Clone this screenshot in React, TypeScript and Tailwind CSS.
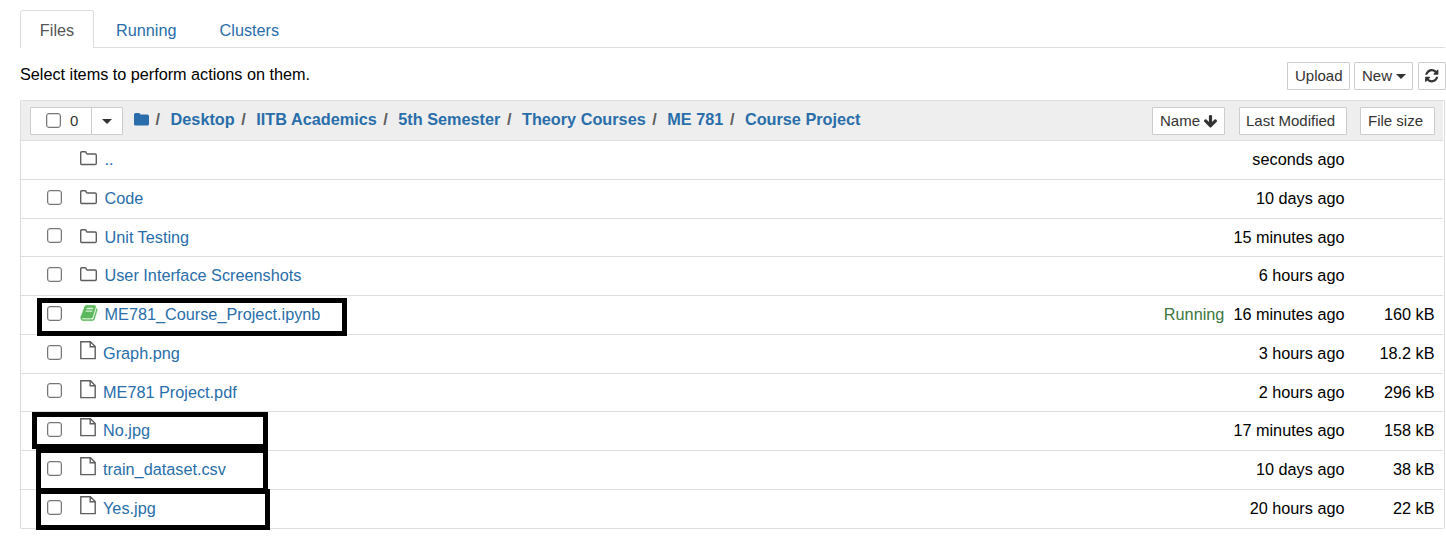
import React from "react";

type Kind = "folder" | "notebook" | "file";

interface Entry {
  name: string;
  kind: Kind;
  modified: string;
  size?: string;
  running?: boolean;
  parent?: boolean;
  short?: boolean;
}

const entries: Entry[] = [
  { name: "..", kind: "folder", modified: "seconds ago", parent: true },
  { name: "Code", kind: "folder", modified: "10 days ago" },
  { name: "Unit Testing", kind: "folder", modified: "15 minutes ago", short: true },
  { name: "User Interface Screenshots", kind: "folder", modified: "6 hours ago" },
  { name: "ME781_Course_Project.ipynb", kind: "notebook", modified: "16 minutes ago", size: "160 kB", running: true },
  { name: "Graph.png", kind: "file", modified: "3 hours ago", size: "18.2 kB" },
  { name: "ME781 Project.pdf", kind: "file", modified: "2 hours ago", size: "296 kB", short: true },
  { name: "No.jpg", kind: "file", modified: "17 minutes ago", size: "158 kB" },
  { name: "train_dataset.csv", kind: "file", modified: "10 days ago", size: "38 kB" },
  { name: "Yes.jpg", kind: "file", modified: "20 hours ago", size: "22 kB" },
];

const crumbs = ["Desktop", "IITB Academics", "5th Semester", "Theory Courses", "ME 781", "Course Project"];

const marks = [
  "left-[37px] top-[298px] w-[310px] h-[38px]",
  "left-[32px] top-[412px] w-[236px] h-[37px]",
  "left-[36px] top-[448px] w-[232px] h-[45px]",
  "left-[36px] top-[489px] w-[234px] h-[41px]",
];

function FolderOutline() {
  return (
    <svg className="h-[15px] w-[18px]" viewBox="0 0 18 15" fill="none" stroke="#5e5e5e" strokeWidth="1.4">
      <path d="M.7 12.3V1.9Q.7.7 1.9.7H5.1Q6.3.7 6.3 1.9V2.3Q6.3 3 7.3 3H15.1Q16.3 3 16.3 4.2V12.3Q16.3 13.5 15.1 13.5H1.9Q.7 13.5.7 12.3Z" />
    </svg>
  );
}

function FileOutline() {
  return (
    <svg className="h-[19px] w-[16px]" viewBox="0 0 16 19" fill="none" stroke="#5e5e5e" strokeWidth="1.4">
      <path d="M.8.8H10.4L15.2 5.6V17.6H.8ZM10.2.9V5.8H15.1" />
    </svg>
  );
}

function BookIcon() {
  return (
    <svg className="h-[18px] w-[18px]" viewBox="0 0 1792 1792" fill="#5cb85c" stroke="#5cb85c" strokeWidth="30">
      <path d="M1703 478q40 57 18 129l-275 906q-19 64-76.5 107.5t-122.5 43.5h-923q-77 0-148.5-53.5t-99.5-131.5q-24-67-2-127 0-4 3-27t4-37q1-8-3-21.5t-3-19.5q2-11 8-21t16.5-23.5 16.5-23.5q23-38 45-91.5t30-91.5q3-10 .5-30t-.5-28q3-11 17-28t17-23q21-36 42-92t25-90q1-9-2.5-32t.5-28q4-13 22-30.5t22-22.5q19-26 42.5-84.5t27.5-96.5q1-8-3-25.5t-2-26.5q2-8 9-18t18-23 17-21q8-12 16.5-30.5t15-35 16-36 19.5-32 26.5-23.5 36-11.5 47.5 5.5l-1 3q38-9 51-9h761q74 0 114 56t18 130l-274 906q-36 119-71.5 153.5t-128.5 34.5h-869q-27 0-38 15-11 16-1 43 24 70 144 70h923q29 0 56-15.5t35-41.5l300-987q7-22 5-57 38 15 59 43zm-1064 2q-4 13 2 22.5t20 9.5h608q13 0 25.5-9.5t16.5-22.5l21-64q4-13-2-22.5t-20-9.5h-608q-13 0-25.5 9.5t-16.5 22.5zm-83 256q-4 13 2 22.5t20 9.5h608q13 0 25.5-9.5t16.5-22.5l21-64q4-13-2-22.5t-20-9.5h-608q-13 0-25.5 9.5t-16.5 22.5z" />
    </svg>
  );
}

function FolderSolid() {
  return (
    <svg className="h-[13px] w-[15px]" viewBox="0 0 15 13" fill="#296eaa">
      <path d="M0 1.6Q0 0 1.6 0H4.6Q6.4 0 6.4 1.6H13.4Q15 1.6 15 3.2V11Q15 12.6 13.4 12.6H1.6Q0 12.6 0 11Z" />
    </svg>
  );
}

function RefreshIcon() {
  return (
    <svg className="h-[15.5px] w-[15.5px]" viewBox="0 0 1792 1792" fill="#333">
      <path d="M1639 1056q0 5-1 7-64 268-268 434.5t-478 166.5q-146 0-282.5-55t-243.5-157l-129 129q-19 19-45 19t-45-19-19-45v-448q0-26 19-45t45-19h448q26 0 45 19t19 45-19 45l-137 137q71 66 161 102t187 36q134 0 250-65t186-179q11-17 53-117 8-23 30-23h192q13 0 22.5 9.5t9.5 22.5zm25-800v448q0 26-19 45t-45 19h-448q-26 0-45-19t-19-45 19-45l138-138q-148-137-349-137-134 0-250 65t-186 179q-11 17-53 117-8 23-30 23h-199q-13 0-22.5-9.5t-9.5-22.5v-7q65-268 270-434.5t480-166.5q146 0 284 55.5t245 156.5l130-129q19-19 45-19t45 19 19 45z" />
    </svg>
  );
}

function ArrowDown() {
  return (
    <svg className="h-[15px] w-[15px]" viewBox="0 0 1792 1792" fill="#333">
      <path d="M1675 832q0 53-37 90l-651 652q-39 37-91 37-53 0-90-37l-651-652q-38-36-38-90 0-53 38-91l74-75q39-37 91-37 53 0 90 37l294 294v-704q0-52 38-90t90-38h128q52 0 90 38t38 90v704l294-294q37-37 90-37 52 0 91 37l75 75q37 39 37 91z" />
    </svg>
  );
}

function Caret() {
  return (
    <svg className="h-[5px] w-[10px]" viewBox="0 0 10 5" fill="#333">
      <path d="M0 0H10L5 5Z" />
    </svg>
  );
}

function Checkbox() {
  return <span role="checkbox" aria-checked="false" className="block size-[15px] shrink-0 rounded-[3px] border border-[#767676] bg-white shadow-[inset_0_0_0_0.5px_#76767680]" />;
}

function Button({ className, children }: { className: string; children: React.ReactNode }) {
  return (
    <button className={`flex h-[28px] shrink-0 items-center rounded-[1px] border border-[#ccc] bg-white text-[15px] leading-[26px] text-[#333] ${className}`}>
      {children}
    </button>
  );
}

function Row({ entry }: { entry: Entry }) {
  const icon = entry.kind === "folder" ? <FolderOutline /> : entry.kind === "notebook" ? <BookIcon /> : <FileOutline />;
  const iconPlace = entry.kind === "folder" ? "pt-[10px] w-[24.5px]" : entry.kind === "notebook" ? "pt-[8px] w-[24.5px]" : "pt-[6px] w-[23px]";
  return (
    <div className={`flex items-start border-b border-[#ddd] ${entry.short ? "h-[38px]" : "h-[39px]"}`}>
      <div className={`w-[59px] shrink-0 pl-[26px] ${entry.short ? "pt-[9px]" : "pt-[10px]"}`}>{!entry.parent && <Checkbox />}</div>
      <div className={`shrink-0 ${iconPlace}`}>{icon}</div>
      <a className="pt-[8px] leading-[20px] text-[#296eaa]">{entry.name}</a>
      <div className="ml-auto flex pt-[8px] leading-[20px]">
        {entry.running && <span className="mr-[9px] text-[#3c763d]">Running</span>}
        <span>{entry.modified}</span>
        <span className="mr-[8.5px] w-[90px] text-right">{entry.size}</span>
      </div>
    </div>
  );
}

export default function App() {
  return (
    <div className="relative h-[557px] w-[1446px] overflow-hidden bg-white pl-[20px] font-['Liberation_Sans',Arial,sans-serif] text-[16.25px] text-black">
      <nav className="mr-px flex h-[48px] items-end border-b border-[#ddd] leading-[20px]">
        <a className="-mb-px flex h-[38px] w-[74px] items-center justify-center rounded-t-[3px] border border-b-0 border-[#ddd] bg-white text-[#555]">Files</a>
        <a className="ml-[22px] h-[27px] text-[#296eaa]">Running</a>
        <a className="ml-[43px] h-[27px] text-[#296eaa]">Clusters</a>
      </nav>

      <div className="flex h-[52px] items-start pt-[14px]">
        <p className="pt-[2px] leading-[20px] tracking-[-0.02px]">Select items to perform actions on them.</p>
        <Button className="ml-auto mr-[4px] w-[63px] pl-[7px]">Upload</Button>
        <Button className="mr-[5px] w-[59px] pl-[7px]">
          New<span className="ml-[4px] pt-px"><Caret /></span>
        </Button>
        <Button className="w-[28px] justify-center"><RefreshIcon /></Button>
      </div>

      <main className="w-[1425px] rounded-[2px] border border-[#ddd] border-b-0 pr-px">
        <header className="flex h-[40px] border-b border-[#ddd] bg-[#eee] pl-[9px] pt-[6px]">
          <div className="flex h-[28px] w-[93px] shrink-0 rounded-[1px] border border-[#ccc] bg-white text-[15px] leading-[26px] text-[#333]">
            <div className="flex w-[61px] items-start border-r border-[#ccc] pl-[15px]">
              <span className="pt-[5px]"><Checkbox /></span>
              <span className="ml-[9px]">0</span>
            </div>
            <div className="flex flex-1 items-center justify-center"><Caret /></div>
          </div>
          <div className="flex pl-[11px] pt-[2px] font-bold leading-[20px] text-[#296eaa]">
            <span className="pt-[4px]"><FolderSolid /></span>
            {crumbs.map((c) => (
              <React.Fragment key={c}>
                <span className="w-[21.6px] pl-[6.6px] text-[#5e5e5e]">/</span>
                <a>{c}</a>
              </React.Fragment>
            ))}
          </div>
          <Button className="ml-auto mr-[14px] w-[73px] pl-[7px]">Name<span className="ml-[3px]"><ArrowDown /></span></Button>
          <Button className="mr-[13px] w-[108px] pl-[6px]">Last Modified</Button>
          <Button className="mr-[8px] w-[75px] pl-[7px]">File size</Button>
        </header>
        {entries.map((e) => <Row key={e.name} entry={e} />)}
      </main>

      {marks.map((m) => (
        <div key={m} className={`pointer-events-none absolute border-[5px] border-black ${m}`} />
      ))}
    </div>
  );
}
